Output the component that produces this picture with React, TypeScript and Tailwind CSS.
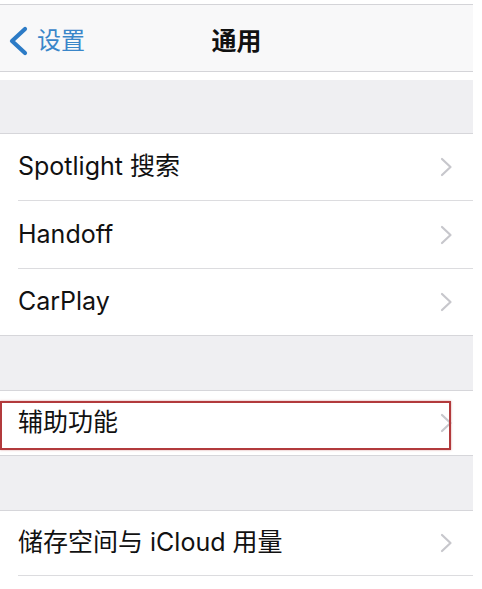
const font = { fontFamily: 'Inter, "Noto Sans CJK SC", sans-serif' };

const Chevron = () => (
  <svg width="13" height="20" viewBox="0 0 13 20" className="shrink-0">
    <path d="M2 2 L10.5 10 L2 18" fill="none" stroke="#c7c7cc" strokeWidth="2.2" strokeLinecap="round" strokeLinejoin="round" />
  </svg>
);

const Row = ({ label, inset = true, h = "h-[67px]" }: { label: string; inset?: boolean; h?: string }) => (
  <div className={`relative flex ${h} items-center bg-white pl-[18px]`}>
    <div className={`flex h-full flex-1 items-center pr-[20px] ${inset ? "border-b border-[#dcdcdf]" : ""}`}>
      <span className="flex-1 text-[25px] text-[#111]">{label}</span>
      <Chevron />
    </div>
  </div>
);

export default function App() {
  return (
    <div className="h-[589px] w-[482px] overflow-hidden bg-white" style={font}>
      <div className="w-[473px]">
        <div className="h-[4px] bg-white" />
        {/* nav bar */}
        <div className="relative flex h-[68px] items-center border-y border-[#d4d4d8] bg-[#f8f8f9]">
          <div className="flex items-center pl-[6px] pt-[6px]">
            <svg width="24" height="30" viewBox="0 0 24 30">
              <path d="M19 3 L6 15 L19 27" fill="none" stroke="#2c7bc6" strokeWidth="4.2" strokeLinecap="round" strokeLinejoin="round" />
            </svg>
            <span className="ml-[7px] text-[24px] text-[#3a86c9]">设置</span>
          </div>
          <span className="absolute left-0 right-0 top-[18px] text-center text-[25px] font-semibold text-[#111]">通用</span>
        </div>
        <div className="h-[8px] bg-white" />
        <div className="h-[54px] border-b border-[#d6d6da] bg-[#efeff2]" />

        <Row label="Spotlight 搜索" h="h-[67px]" />
        <Row label="Handoff" h="h-[68px]" />
        <div className="flex h-[67px] items-center border-b border-[#d6d6da] bg-white pl-[18px] pr-[20px]">
          <span className="flex-1 text-[25px] text-[#111]">CarPlay</span>
          <Chevron />
        </div>

        <div className="h-[55px] border-b border-[#d6d6da] bg-[#efeff2]" />

        <div className="relative flex h-[65px] items-center border-b border-[#d6d6da] bg-white pl-[18px] pr-[20px]">
          <span className="flex-1 text-[25px] text-[#111]">辅助功能</span>
          <Chevron />
          <div className="absolute left-0 top-[10px] h-[49px] w-[451px] border-2 border-[#b23a3c] shadow-[0_0_2px_rgba(178,58,60,0.5)]" />
        </div>

        <div className="h-[55px] border-b border-[#d6d6da] bg-[#efeff2]" />

        <Row label="储存空间与 iCloud 用量" h="h-[65px]" />
      </div>
    </div>
  );
}
